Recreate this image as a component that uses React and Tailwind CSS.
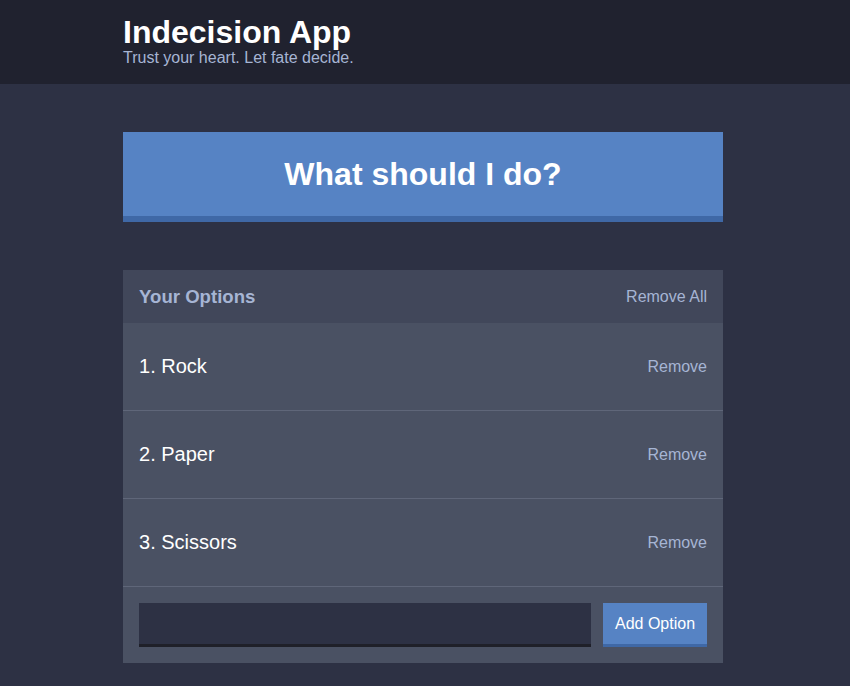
export default function App() {
  const options = ['Rock', 'Paper', 'Scissors'];

  return (
    <div className="min-h-[686px] bg-[#2d3144] font-['Liberation_Sans',Arial,sans-serif]">
      {/* Header */}
      <div className="bg-[#20222f] h-[84px]">
        <div className="w-[600px] ml-[123px] pt-[14px]">
          <h1 className="text-[32px] leading-[36px] font-bold text-white">Indecision App</h1>
          <h2 className="text-[16px] leading-[16px] text-[#a6b5d4]">Trust your heart. Let fate decide.</h2>
        </div>
      </div>

      <div className="w-[600px] ml-[123px] pt-[48px]">
        <button className="w-full h-[90px] bg-[#5683c4] border-b-[6px] border-[#3f68a6] text-white text-[32px] font-bold">
          What should I do?
        </button>

        <div className="mt-[48px] bg-[#4a5163]">
          <div className="h-[53px] bg-[#41475a] flex items-center justify-between px-4">
            <h3 className="text-[18.6px] font-bold text-[#a6b5d4]">Your Options</h3>
            <button className="text-[16px] text-[#a6b5d4]">Remove All</button>
          </div>

          {options.map((option, index) => (
            <div
              key={option}
              className="h-[88px] flex items-center justify-between px-4 border-b border-[#5f6679]"
            >
              <p className="text-[20px] text-white -mt-[2px]">{index + 1}. {option}</p>
              <button className="text-[16px] text-[#a6b5d4]">Remove</button>
            </div>
          ))}

          <form className="flex gap-3 px-4 pt-4 pb-4">
            <input
              type="text"
              className="flex-1 h-[44px] bg-[#2d3144] border-b-[3px] border-[#1f2029] outline-none text-white px-3"
            />
            <button className="w-[104px] h-[44px] bg-[#5683c4] border-b-[3px] border-[#3f68a6] text-white text-[16px]">
              Add Option
            </button>
          </form>
        </div>
      </div>
    </div>
  );
}
